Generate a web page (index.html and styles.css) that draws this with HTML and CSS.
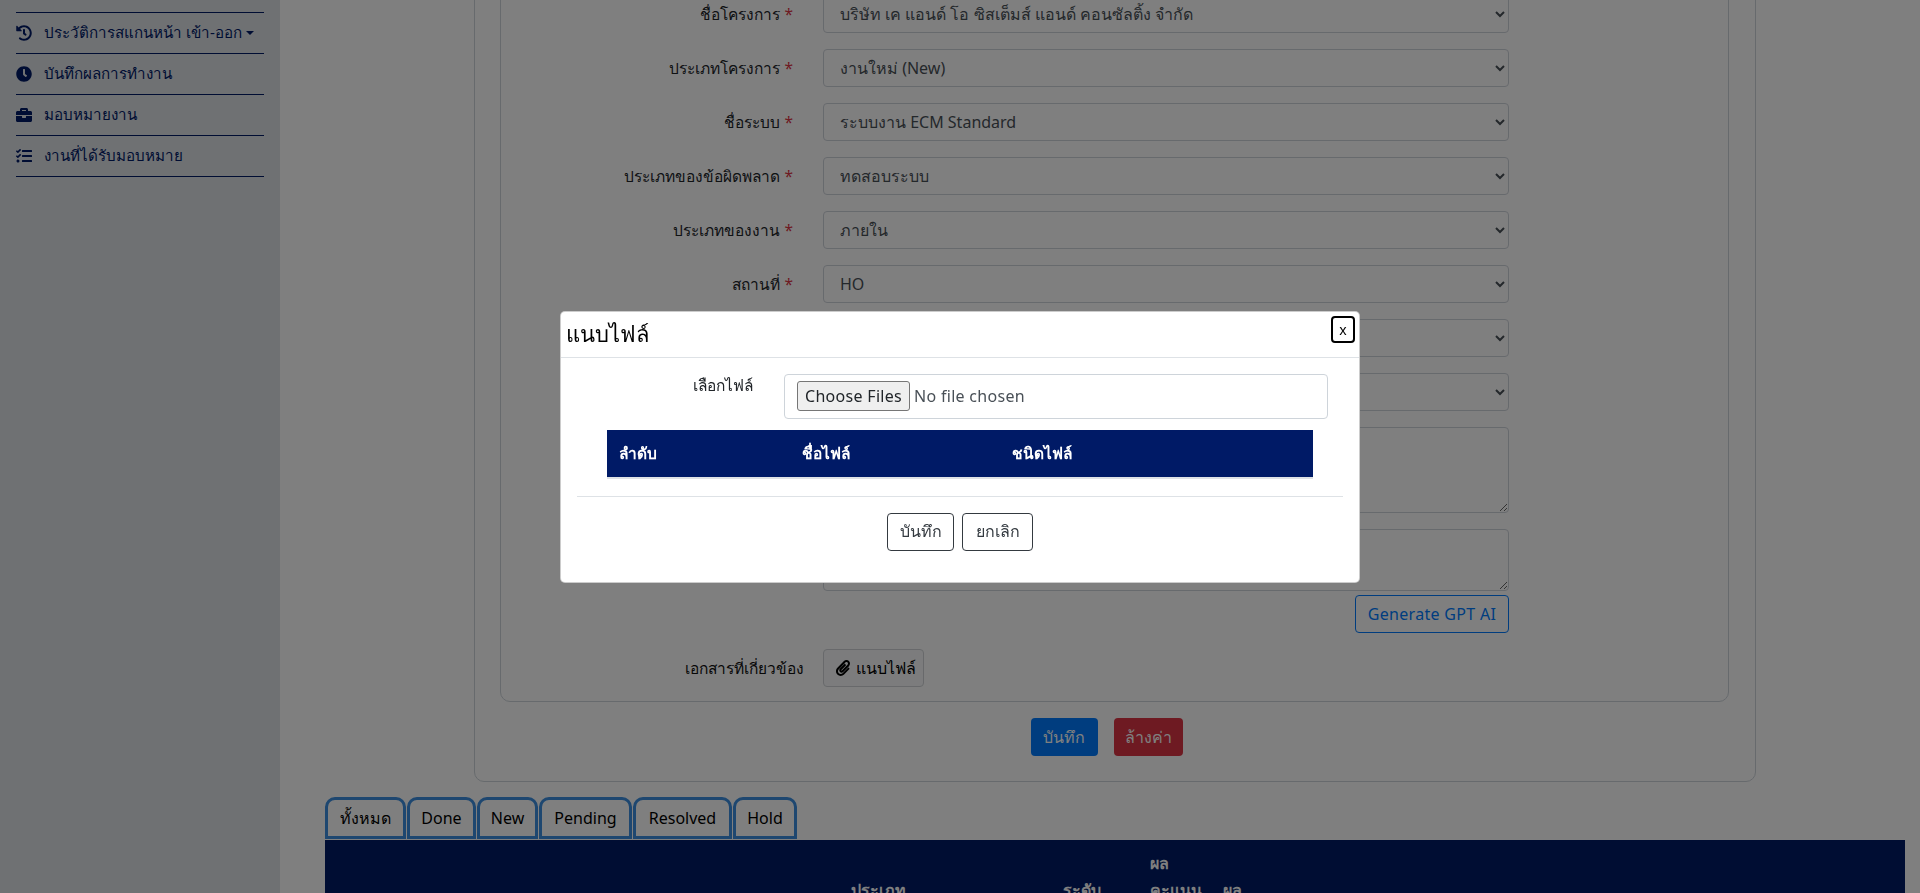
FILE: index.html
```html
<!DOCTYPE html>
<html lang="th">
<head>
<meta charset="utf-8">
<title>แบบฟอร์ม</title>
<link rel="stylesheet" href="styles.css">
</head>
<body>
<div class="layout">
  <aside class="sidebar">
    <ul class="menu">
      <li class="menu-item"><svg class="menu-icon" viewBox="0 0 512 512"><path d="M504 255.531c.253 136.64-111.18 248.372-247.82 248.468-59.015.042-113.223-20.53-155.822-54.911-11.077-8.94-11.905-25.541-1.839-35.607l11.267-11.267c8.609-8.609 22.353-9.551 31.891-1.984C173.062 425.135 212.781 440 256 440c101.705 0 184-82.311 184-184 0-101.705-82.311-184-184-184-48.814 0-93.149 18.969-126.068 49.932l50.754 50.754c10.08 10.08 2.941 27.314-11.313 27.314H24c-8.837 0-16-7.163-16-16V38.627c0-14.254 17.234-21.393 27.314-11.314l49.372 49.372C129.209 34.136 189.552 8 256 8c136.81 0 247.747 110.78 248 247.531zm-180.912 78.784l9.823-12.63c8.138-10.463 6.253-25.542-4.21-33.679L288 256.349V152c0-13.255-10.745-24-24-24h-16c-13.255 0-24 10.745-24 24v135.651l65.409 50.874c10.463 8.137 25.541 6.253 33.679-4.21z"/></svg><span>ประวัติการสแกนหน้า เข้า-ออก</span><i class="caret"></i></li>
      <li class="menu-item"><svg class="menu-icon" viewBox="0 0 512 512"><path d="M256,8C119,8,8,119,8,256S119,504,256,504,504,393,504,256,393,8,256,8Zm92.49,313h0l-20,25a16,16,0,0,1-22.49,2.5h0l-67-49.72a40,40,0,0,1-15-31.23V112a16,16,0,0,1,16-16h32a16,16,0,0,1,16,16V256l58,42.5A16,16,0,0,1,348.49,321Z"/></svg><span>บันทึกผลการทำงาน</span></li>
      <li class="menu-item"><svg class="menu-icon" viewBox="0 0 512 512"><path d="M320 336c0 8.84-7.16 16-16 16h-96c-8.84 0-16-7.16-16-16v-48H0v144c0 25.6 22.4 48 48 48h416c25.6 0 48-22.4 48-48V288H320v48zm144-208h-80V80c0-25.6-22.4-48-48-48H176c-25.6 0-48 22.4-48 48v48H48c-25.6 0-48 22.4-48 48v80h512v-80c0-25.6-22.4-48-48-48zm-144 0H192V96h128v32z"/></svg><span>มอบหมายงาน</span></li>
      <li class="menu-item"><svg class="menu-icon" viewBox="0 0 512 512"><path d="M139.61 35.5a12 12 0 0 0-17 0L58.93 98.81l-22.7-22.12a12 12 0 0 0-17 0L3.53 92.41a12 12 0 0 0 0 17l47.59 47.4a12.78 12.78 0 0 0 17.61 0l15.59-15.62L156.52 69a12.09 12.09 0 0 0 .09-17zm0 159.19a12 12 0 0 0-17 0l-63.68 63.72-22.7-22.1a12 12 0 0 0-17 0L3.53 252a12 12 0 0 0 0 17L51 316.5a12.77 12.77 0 0 0 17.6 0l15.7-15.69 72.2-72.22a12 12 0 0 0 .09-16.9zM64 368c-26.49 0-48.59 21.5-48.59 48S37.53 464 64 464a48 48 0 0 0 0-96zm432 16H208a16 16 0 0 0-16 16v32a16 16 0 0 0 16 16h288a16 16 0 0 0 16-16v-32a16 16 0 0 0-16-16zm0-320H208a16 16 0 0 0-16 16v32a16 16 0 0 0 16 16h288a16 16 0 0 0 16-16V80a16 16 0 0 0-16-16zm0 160H208a16 16 0 0 0-16 16v32a16 16 0 0 0 16 16h288a16 16 0 0 0 16-16v-32a16 16 0 0 0-16-16z"/></svg><span>งานที่ได้รับมอบหมาย</span></li>
    </ul>
  </aside>
  <main class="main">
    <section class="outer-card">
      <div class="inner-card">
        <div class="row"><label class="lbl">ชื่อโครงการ <b>*</b></label><select class="ctl"><option>บริษัท เค แอนด์ โอ ซิสเต็มส์ แอนด์ คอนซัลติ้ง จำกัด</option></select></div>
        <div class="row"><label class="lbl">ประเภทโครงการ <b>*</b></label><select class="ctl"><option>งานใหม่ (New)</option></select></div>
        <div class="row"><label class="lbl">ชื่อระบบ <b>*</b></label><select class="ctl"><option>ระบบงาน ECM Standard</option></select></div>
        <div class="row"><label class="lbl">ประเภทของข้อผิดพลาด <b>*</b></label><select class="ctl"><option>ทดสอบระบบ</option></select></div>
        <div class="row"><label class="lbl">ประเภทของงาน <b>*</b></label><select class="ctl"><option>ภายใน</option></select></div>
        <div class="row"><label class="lbl">สถานที่ <b>*</b></label><select class="ctl"><option>HO</option></select></div>
        <div class="row"><label class="lbl">ระดับ <b>*</b></label><select class="ctl"><option></option></select></div>
        <div class="row"><label class="lbl">ผู้รับผิดชอบ <b>*</b></label><select class="ctl"><option></option></select></div>
        <div class="row"><label class="lbl">รายละเอียด <b>*</b></label><textarea class="ctl area-a"></textarea></div>
        <div class="row row-tight"><label class="lbl">วิธีแก้ไข <b>*</b></label><textarea class="ctl area-b"></textarea></div>
        <div class="gpt-row"><button class="btn-gpt">Generate GPT AI</button></div>
        <div class="row row-last"><label class="lbl lbl-plain">เอกสารที่เกี่ยวข้อง</label>
          <button class="btn-attach"><svg class="clip" viewBox="0 0 448 512"><path d="M43.246 466.142c-58.43-60.289-57.341-157.511 1.386-217.581L254.392 34c44.316-45.332 116.351-45.336 160.671 0 43.89 44.894 43.943 117.329 0 162.276L232.214 383.128c-29.855 30.537-78.633 30.111-107.982-.998-28.275-29.97-27.368-77.473 1.452-106.953l143.743-146.835c6.182-6.314 16.312-6.422 22.626-.241l22.861 22.379c6.315 6.182 6.422 16.312.241 22.626L171.427 319.927c-4.932 5.045-5.236 13.428-.648 18.292 4.372 4.634 11.245 4.711 15.688.165l182.849-186.851c19.613-20.062 19.613-52.725-.011-72.798-19.189-19.627-49.957-19.637-69.154 0L90.39 293.295c-34.763 35.56-35.299 93.12-1.191 128.313 34.01 35.093 88.985 35.137 123.058.286l172.06-175.999c6.177-6.319 16.307-6.433 22.626-.256l22.877 22.364c6.319 6.177 6.434 16.307.256 22.626l-172.06 175.998c-59.576 60.938-155.943 60.216-214.77-.485z"/></svg>แนบไฟล์</button>
        </div>
      </div>
      <div class="form-actions">
        <button class="btn btn-save">บันทึก</button>
        <button class="btn btn-reset">ล้างค่า</button>
      </div>
    </section>
    <nav class="tabs">
      <a class="tab tab-all">ทั้งหมด</a><a class="tab tab-done">Done</a><a class="tab tab-new">New</a><a class="tab tab-pending">Pending</a><a class="tab tab-resolved">Resolved</a><a class="tab tab-hold">Hold</a>
    </nav>
    <table class="data">
      <thead>
        <tr>
          <th class="c1"></th>
          <th class="c2">ประเภท<br>โครงการ</th>
          <th class="c3">ระดับ<br>งาน</th>
          <th class="c4">ผล<br>คะแนน<br>ประเมิน</th>
          <th class="c5">ผล<br>งาน</th>
          <th></th>
        </tr>
      </thead>
    </table>
  </main>
</div>

<div class="overlay">
  <div class="modal">
    <header class="modal-head">
      <h2 class="modal-title">แนบไฟล์</h2>
      <button class="modal-close">x</button>
    </header>
    <div class="modal-body">
      <div class="file-row">
        <label class="file-label">เลือกไฟล์</label>
        <div class="file-box"><button class="file-btn">Choose Files</button><span class="file-none">No file chosen</span></div>
      </div>
      <table class="file-table">
        <thead><tr><th class="f1">ลำดับ</th><th class="f2">ชื่อไฟล์</th><th>ชนิดไฟล์</th></tr></thead>
      </table>
      <hr class="divider">
      <div class="modal-actions">
        <button class="btn-outline btn-ok">บันทึก</button>
        <button class="btn-outline btn-cancel">ยกเลิก</button>
      </div>
    </div>
  </div>
</div>
</body>
</html>
```
FILE: styles.css
```css
* { box-sizing: border-box; }
html, body { margin: 0; height: 100%; overflow: hidden; }
body { font-family: "Noto Sans", "Open Sans", sans-serif; font-size: 16px; color: #212529; background: #fff; }
button, select, textarea { font: inherit; }

.layout { display: flex; height: 893px; overflow: hidden; }

.sidebar { width: 280px; flex: none; background: #dee2e6; padding: 12px 16px 0; }
.menu { list-style: none; margin: 0; padding: 0; border-top: 1px solid #001a66; }
.menu-item { display: flex; align-items: center; height: 41px; border-bottom: 1px solid #001a66; color: #001a66; font-size: 15.2px; white-space: nowrap; }
.menu-icon { width: 16px; height: 16px; fill: #001a66; flex: none; margin-right: 12px; }
.caret { display: inline-block; margin-left: 4px; border-top: 4px solid #001a66; border-left: 4px solid transparent; border-right: 4px solid transparent; }

.main { flex: 1; min-width: 0; padding: 0 15px 0 45px; margin-top: -100px; }

.outer-card { margin: 0 149px; border: 1px solid #ced4da; border-radius: 10px; padding: 20px 26px 25px 25px; }
.inner-card { border: 1px solid #ced4da; border-radius: 10px; padding: 73px 219px 14px 0; }

.row { display: flex; align-items: flex-start; margin-bottom: 16px; }
.row-tight { margin-bottom: 4px; }
.row-last { margin-bottom: 0; }
.lbl { width: 292px; flex: none; margin-right: 30px; text-align: right; padding-top: 7px; font-size: 15.5px; white-space: nowrap; }
.lbl b { color: #dc3545; font-weight: 400; }
.lbl-plain { width: 303px; margin-right: 19px; color: #111; }
.ctl { flex: 1; min-width: 0; height: 38px; border: 1px solid #ced4da; border-radius: 4px; background: #fff; padding: 6px 12px; color: #495057; }
.area-a { height: 86px; }
.area-b { height: 62px; }
.gpt-row { display: flex; justify-content: flex-end; margin-bottom: 16px; }
.btn-gpt { height: 38px; width: 154px; padding: 0; border: 1px solid #007bff; border-radius: 4px; background: transparent; color: #007bff; letter-spacing: .3px; }
.btn-attach { display: flex; align-items: center; width: 101px; height: 38px; padding: 0 12px; border: 1px solid #d0d3d6; border-radius: 4px; background: #f8f9fa; color: #000; white-space: nowrap; }
.clip { width: 14px; height: 16px; flex: none; margin-right: 6px; fill: #000; }

.form-actions { display: flex; justify-content: center; margin-top: 16px; }
.btn { height: 38px; padding: 0; margin-right: 16px; border: 0; border-radius: 4px; color: #fff; white-space: nowrap; }
.btn-save { background: #007bff; width: 67px; }
.btn-reset { background: #dc3545; width: 69px; }

.tabs { display: flex; gap: 1px; margin-top: 15px; height: 43px; }
.tab { display: flex; align-items: center; justify-content: center; height: 42px; border: 3px solid #3c8fe0; border-radius: 10px 10px 0 0; background: #fff; color: #000; }
.tab-all { width: 81px; }
.tab-done { width: 69px; }
.tab-new { width: 61px; }
.tab-pending { width: 93px; }
.tab-resolved { width: 99px; }
.tab-hold { width: 64px; }

.data { width: 100%; border-collapse: collapse; background: #001a66; color: #fff; }
.data th { padding: 10px 0; font-weight: 600; text-align: left; vertical-align: bottom; line-height: 27px; white-space: nowrap; }
.c1 { width: 526px; }
.c2 { width: 212px; }
.c3 { width: 87px; }
.c4 { width: 73px; }
.c5 { width: 60px; }

.overlay { position: fixed; inset: 0; background: rgba(0,0,0,.5); display: flex; align-items: center; justify-content: center; }
.modal { width: 800px; height: 272px; background: #fff; border: 1px solid rgba(0,0,0,.2); border-radius: 5px; }
.modal-head { position: relative; height: 46px; border-bottom: 1px solid #dee2e6; display: flex; align-items: center; padding-left: 5px; }
.modal-title { margin: 0; font-size: 22px; font-weight: 400; color: #000; }
.modal-close { position: absolute; top: 4px; right: 4px; width: 24px; height: 27px; padding: 0; border: 2px solid #000; border-radius: 4px; background: #fff; color: #000; font-size: 14px; }
.modal-body { padding: 16px 16px 0; }
.file-row { display: flex; align-items: flex-start; }
.file-label { width: 176px; flex: none; text-align: right; margin-right: 31px; font-size: 15.5px; line-height: 22px; }
.file-box { flex: 1; height: 45px; margin-right: 15px; border: 1px solid #ced4da; border-radius: 4px; padding: 6px 12px; display: flex; align-items: center; color: #495057; letter-spacing: .3px; }
.file-btn { height: 30px; width: 113px; padding: 0; border: 1px solid #767676; border-radius: 3px; background: #efefef; color: #212529; letter-spacing: .3px; }
.file-none { margin-left: 4px; }
.file-table { width: 706px; margin: 11px 0 0 30px; border-collapse: collapse; background: #001a66; color: #fff; border-bottom: 2px solid #dee2e6; font-size: 15.5px; }
.file-table th { height: 48px; padding: 0 12px; text-align: left; font-weight: 700; }
.f1 { width: 183px; }
.f2 { width: 210px; }
.divider { margin: 17px 0 0; border: 0; border-top: 1px solid #dee2e6; }
.modal-actions { display: flex; justify-content: center; gap: 8px; margin-top: 16px; }
.btn-outline { height: 38px; padding: 0; border: 1px solid #343a40; border-radius: 4px; background: #fff; color: #343a40; }
.btn-ok { width: 67px; }
.btn-cancel { width: 71px; }
```
